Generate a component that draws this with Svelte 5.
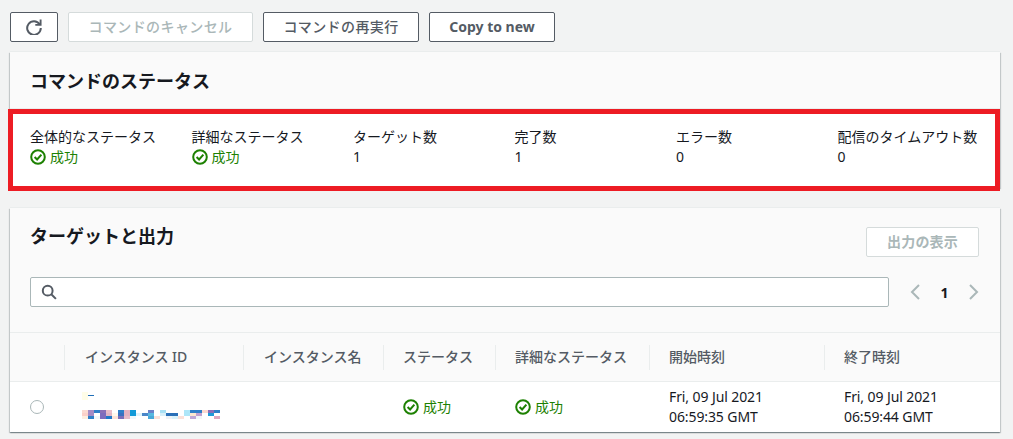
<script>
	const stats = [
		{ label: '全体的なステータス', ok: true },
		{ label: '詳細なステータス', ok: true },
		{ label: 'ターゲット数', value: '1' },
		{ label: '完了数', value: '1' },
		{ label: 'エラー数', value: '0' },
		{ label: '配信のタイムアウト数', value: '0' }
	];

	// blurred-out instance id, one column of three colours per block
	const mosaic = [
		['#fbd9d0', '#fbd0c8', '#fdeee0'], ['#a58bc4', '#a58bc4', '#2f7fc8'], ['#2f7fc8', '#ffffff', '#f2f6f8'],
		['#8a6fb8', '#7e6bbd', '#7e6bbd'], ['#e8bcc8', '#e0b4c4', '#1f78c8'], ['#ffffff', '#fff8ec', '#fbe3d8'],
		['#2f7fc8', '#3a70c0', '#7b6fb8'], ['#e4b2c0', '#e4b2c0', '#e8bcc8'], ['#109ad8', '#109ad8', '#eef8fb'],
		['#ffffff', '#dff4fb', '#ffffff'], ['#ffffff', '#4a86c8', '#ffffff'], ['#6a80c8', '#58b8e0', '#4aa8d8'],
		['#ffffff', '#ffffff', '#fbe0d8'], ['#a8e0f4', '#d8f0fa', '#ffffff'], ['#ffffff', '#2a70b8', '#eef2f6'],
		['#ffffff', '#2a70b8', '#d8f2fa'], ['#ffffff', '#ffffff', '#fbe0d8'], ['#aee6f8', '#aee6f8', '#ffffff'],
		['#2f7fc8', '#fde8d0', '#c0a8d8'], ['#2f7fc8', '#c0a0d0', '#f2f6f8'], ['#fbd8d0', '#ffffff', '#ffffff'],
		['#8a6fb8', '#1f9ad8', '#ffffff'], ['#2f7fc8', '#ffffff', '#e0a8c0']
	];

	const columns = [
		{ label: '', cls: 'c0' },
		{ label: 'インスタンス ID', cls: 'c1' },
		{ label: 'インスタンス名', cls: 'c2' },
		{ label: 'ステータス', cls: 'c3' },
		{ label: '詳細なステータス', cls: 'c4' },
		{ label: '開始時刻', cls: 'c5' },
		{ label: '終了時刻', cls: 'c6' }
	];
</script>

{#snippet okIcon()}
	<svg class="ok-icon" viewBox="0 0 16 16" width="16" height="16" fill="none" stroke="#1d8102" stroke-width="2">
		<circle cx="8" cy="8" r="6.8" />
		<path d="M4.6 8l2.500 2.500 4.300-4.800" />
	</svg>
{/snippet}

{#snippet success()}
	<span class="success">{@render okIcon()}<span>成功</span></span>
{/snippet}

<div class="page">
	<div class="toolbar">
		<button class="btn icon-btn" aria-label="refresh">
			<svg viewBox="0 0 16 16" width="16" height="16" fill="none" stroke="#545b64" stroke-width="2">
				<path d="M13.6 5.2A6.8 6.8 0 1 0 14.800 9" />
				<path d="M14.600 0.600v5.300H9.300" stroke-width="1.900" />
			</svg>
		</button>
		<button class="btn disabled cancel">コマンドのキャンセル</button>
		<button class="btn rerun">コマンドの再実行</button>
		<button class="btn copy">Copy to new</button>
	</div>

	<section class="card status-card">
		<header class="status-head"><h2>コマンドのステータス</h2></header>
		<div class="stats">
			{#each stats as s}
				<div class="stat">
					<div class="stat-label">{s.label}</div>
					{#if s.ok}
						{@render success()}
					{:else}
						<div class="stat-value">{s.value}</div>
					{/if}
				</div>
			{/each}
		</div>
		<div class="highlight"></div>
	</section>

	<section class="card targets">
		<div class="targets-head">
			<div class="title-row">
				<h2>ターゲットと出力</h2>
				<button class="btn disabled output">出力の表示</button>
			</div>
			<div class="search-row">
				<div class="search">
					<svg viewBox="0 0 16 16" width="16" height="16" fill="none" stroke="#545b64" stroke-width="2">
						<circle cx="6.7" cy="6.7" r="4.9" />
						<path d="M10.3 10.3l4.6 4.6" />
					</svg>
				</div>
				<div class="pager">
					<svg viewBox="0 0 12 16" width="12" height="16" fill="none" stroke="#aab7b8" stroke-width="2"><path d="M10 1L3 8l7 7" /></svg>
					<span class="page-no">1</span>
					<svg viewBox="0 0 12 16" width="12" height="16" fill="none" stroke="#aab7b8" stroke-width="2"><path d="M2 1l7 7-7 7" /></svg>
				</div>
			</div>
		</div>

		<div class="thead">
			{#each columns as c}
				<div class="th {c.cls}">{c.label}</div>
			{/each}
		</div>
		<div class="row">
			<div class="td c0"><span class="radio"></span></div>
			<div class="td c1 id-cell">
				<div class="id-top"><span class="pale"></span><span class="dash"></span></div>
				<div class="mosaic">
					{#each mosaic as m}
						<div class="block">
							<i style="background:{m[0]}"></i><i style="background:{m[1]}"></i><i style="background:{m[2]}"></i>
						</div>
					{/each}
				</div>
			</div>
			<div class="td c2"></div>
			<div class="td c3">{@render success()}</div>
			<div class="td c4">{@render success()}</div>
			<div class="td c5 time">Fri, 09 Jul 2021<br />06:59:35 GMT</div>
			<div class="td c6 time">Fri, 09 Jul 2021<br />06:59:44 GMT</div>
		</div>
	</section>
</div>

<style>
	:global(body) {
		margin: 0;
		background: #f2f3f3;
	}

	.page {
		height: 439px;
		overflow: hidden;
		box-sizing: border-box;
		padding: 12px 13px 0 10px;
		font-family: 'Noto Sans', 'Noto Sans CJK JP', sans-serif;
		font-size: 14px;
		color: #16191f;
	}

	.toolbar {
		display: flex;
		gap: 10px;
		height: 30px;
		margin-bottom: 10px;
	}

	.btn {
		box-sizing: border-box;
		height: 30px;
		padding: 0;
		background: #fff;
		border: 1px solid #545b64;
		border-radius: 2px;
		color: #545b64;
		font: 500 14px/1 'Noto Sans', 'Noto Sans CJK JP', sans-serif;
		letter-spacing: 0.4px;
		display: flex;
		align-items: center;
		justify-content: center;
	}

	.btn.disabled {
		border-color: #d5dbdb;
		color: #aab7b8;
	}

	.icon-btn {
		width: 48px;
	}

	.cancel {
		width: 185px;
	}

	.rerun {
		width: 156px;
	}

	.copy {
		width: 126px;
		font-weight: 700;
		letter-spacing: 0;
	}

	.output {
		width: 113px;
		font-weight: 700;
		letter-spacing: 0.2px;
	}

	.card {
		position: relative;
		background: #fff;
		box-shadow: 0 1px 1px 0 rgba(0, 28, 36, 0.3), 1px 1px 1px 0 rgba(0, 28, 36, 0.15), -1px 1px 1px 0 rgba(0, 28, 36, 0.15), 0 -1px 0 0 #eaeded;
	}

	h2 {
		margin: 0;
		font-size: 18px;
		font-weight: 700;
		line-height: 24px;
		color: #16191f;
	}

	.status-card {
		height: 136px;
		margin-bottom: 20px;
	}

	.status-head {
		height: 57px;
		box-sizing: border-box;
		padding: 17px 20px 0;
		background: #fafafa;
		border-bottom: 1px solid #eaeded;
	}

	.stats {
		display: grid;
		grid-template-columns: repeat(6, 161.500px);
		padding: 18px 0 0 20px;
	}

	.stat {
		line-height: 20px;
		white-space: nowrap;
	}

	.stat-label {
		height: 20px;
	}

	.stat-value {
		color: #16191f;
	}

	.success {
		display: inline-flex;
		align-items: center;
		gap: 4px;
		color: #1d8102;
		line-height: 20px;
	}

	.ok-icon {
		flex: none;
	}

	.highlight {
		position: absolute;
		left: -2px;
		top: 57px;
		width: 992px;
		height: 82px;
		box-sizing: border-box;
		border: 5px solid #ed1c24;
		pointer-events: none;
	}

	.targets {
		height: 224px;
	}

	.targets-head {
		height: 125px;
		box-sizing: border-box;
		padding: 16px 20px 0;
		background: #fafafa;
		border-bottom: 1px solid #eaeded;
	}

	.title-row {
		display: flex;
		justify-content: space-between;
		align-items: flex-start;
		height: 53px;
		padding-right: 1px;
	}

	.title-row .output {
		margin-top: 3px;
	}

	.search-row {
		display: flex;
		align-items: center;
		justify-content: space-between;
	}

	.search {
		box-sizing: border-box;
		width: 859px;
		height: 30px;
		background: #fff;
		border: 1px solid #aab7b8;
		border-radius: 2px;
		padding-left: 10px;
		display: flex;
		align-items: center;
	}

	.pager {
		display: flex;
		align-items: center;
		width: 71px;
		justify-content: space-between;
	}

	.page-no {
		font-size: 14px;
		font-weight: 700;
	}

	.thead {
		display: flex;
		height: 49px;
		box-sizing: border-box;
		align-items: center;
		background: #fafafa;
		border-bottom: 1px solid #eaeded;
	}

	.th {
		box-sizing: border-box;
		height: 25px;
		line-height: 23px;
		padding-left: 20px;
		font-weight: 500;
		color: #545b64;
		border-left: 1px solid #eaeded;
		white-space: nowrap;
	}

	.th.c0 {
		border-left: 0;
	}

	.th.c3,
	.th.c4,
	.th.c5,
	.th.c6 {
		padding-left: 19px;
	}

	.row {
		display: flex;
		height: 50px;
		align-items: center;
	}

	.td {
		box-sizing: border-box;
		padding-left: 20px;
	}

	.c0 {
		width: 54px;
	}

	.c1 {
		width: 179px;
	}

	.c2 {
		width: 140px;
	}

	.c3 {
		width: 112px;
	}

	.c4 {
		width: 154px;
	}

	.c5 {
		width: 175px;
	}

	.c6 {
		flex: 1;
	}

	.td.c3,
	.td.c4 {
		padding-top: 1px;
	}

	.td.c0 {
		display: flex;
	}

	.radio {
		box-sizing: border-box;
		width: 14px;
		height: 14px;
		border: 1.500px solid #aab7b8;
		border-radius: 50%;
		background: #fff;
		margin-top: -1px;
	}

	.id-cell {
		padding-left: 18px;
		padding-bottom: 4px;
	}

	.id-top {
		display: flex;
		align-items: center;
		height: 8px;
		margin-bottom: 10px;
	}

	.pale {
		width: 6px;
		height: 8px;
		background: #fffde8;
	}

	.dash {
		width: 6px;
		height: 1px;
		background: #1f6fb8;
	}

	.mosaic {
		display: flex;
		height: 9px;
	}

	.block {
		display: flex;
		flex-direction: column;
		width: 6px;
	}

	.block i {
		display: block;
		height: 3px;
	}

	.time {
		line-height: 20px;
		letter-spacing: -0.1px;
		white-space: nowrap;
		color: #16191f;
	}
</style>
